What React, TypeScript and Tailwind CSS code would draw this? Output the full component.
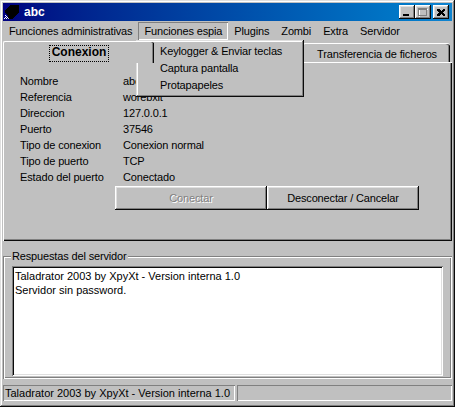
import React from "react";

const raisedWin =
  "shadow-[inset_-1px_-1px_#0a0a0a,inset_1px_1px_#dfdfdf,inset_-2px_-2px_#808080,inset_2px_2px_#ffffff]";
const raisedBtn =
  "shadow-[inset_-1px_-1px_#0a0a0a,inset_1px_1px_#ffffff,inset_-2px_-2px_#808080,inset_2px_2px_#dfdfdf]";
const sunkenThin = "shadow-[inset_1px_1px_#808080,inset_-1px_-1px_#ffffff]";

const menus = [
  "Funciones administrativas",
  "Funciones espia",
  "Plugins",
  "Zombi",
  "Extra",
  "Servidor",
];

const info = [
  ["Nombre", "abc"],
  ["Referencia", "worebxit"],
  ["Direccion", "127.0.0.1"],
  ["Puerto", "37546"],
  ["Tipo de conexion", "Conexion normal"],
  ["Tipo de puerto", "TCP"],
  ["Estado del puerto", "Conectado"],
];

function AppIcon() {
  return (
    <svg width="16" height="16" viewBox="0 0 16 16" shapeRendering="crispEdges">
      <polygon points="6,1 15,1 15,8 8,15 4,15 4,12 1,9 1,6" fill="#000" />
      <rect x="1" y="11" width="1" height="1" fill="#fff" />
      <rect x="2" y="12" width="1" height="1" fill="#fff" />
      <rect x="1" y="13" width="1" height="1" fill="#fff" />
      <rect x="3" y="13" width="1" height="1" fill="#fff" />
      <rect x="2" y="14" width="1" height="1" fill="#fff" />
      <rect x="0" y="14" width="1" height="1" fill="#fff" />
      <rect x="4" y="14" width="1" height="1" fill="#c0c0c0" />
    </svg>
  );
}

function TitleBar() {
  return (
    <div className="h-[18px] flex items-center bg-linear-to-r from-[#000080] to-[#1084d0]">
      <div className="ml-[1px] w-4 h-4">
        <AppIcon />
      </div>
      <span className="ml-[4px] font-bold text-white text-[12px] tracking-normal">abc</span>
      <div className="flex-1" />
      <div className={`w-[16px] h-[14px] bg-[#c0c0c0] ${raisedBtn} flex items-end pl-[4px] pb-[3px]`}>
        <div className="w-[6px] h-[2px] bg-black" />
      </div>
      <div className={`w-[16px] h-[14px] bg-[#c0c0c0] ${raisedBtn} flex items-center justify-center`}>
        <svg width="10" height="9" viewBox="0 0 10 9" shapeRendering="crispEdges">
          <rect x="1" y="1" width="9" height="8" fill="none" stroke="#fff" strokeWidth="1" />
          <rect x="0.5" y="0.5" width="8" height="7" fill="none" stroke="#808080" strokeWidth="1" />
          <rect x="0" y="0" width="9" height="2" fill="#808080" />
        </svg>
      </div>
      <div className={`ml-[2px] mr-[3px] w-[16px] h-[14px] bg-[#c0c0c0] ${raisedBtn} flex items-center justify-center`}>
        <svg width="8" height="7" viewBox="0 0 8 7" shapeRendering="crispEdges">
          <path d="M0 0h2l2 2 2-2h2v1L6 3.5 8 6v1H6L4 5 2 7H0V6l2-2.5L0 1z" fill="#000" />
        </svg>
      </div>
    </div>
  );
}

function MenuBar() {
  return (
    <div className="mt-[1px] h-[18px] flex">
      {menus.map((m, i) => (
        <div key={m} className={`px-[6px] leading-[18px] ${i === 1 ? sunkenThin : ""}`}>
          {m}
        </div>
      ))}
    </div>
  );
}

function Tabs() {
  return (
    <div className="h-[22px] flex items-end">
      <div className="relative z-10 -mb-px w-[151px] h-[22px] bg-[#c0c0c0] border-t border-l border-white rounded-tl-[2px] rounded-tr-[2px] shadow-[inset_-1px_0_#0a0a0a,inset_-2px_0_#808080] flex justify-center pt-[4px]">
        <span className="h-[15px] px-[2px] leading-[13px] font-bold outline-1 outline-dotted outline-black text-[12px] tracking-normal">
          Conexion
        </span>
      </div>
      {/* pestaña tapada por el menu */}
      <div className="w-[149px] h-[19px] border-t border-l border-white rounded-tl-[2px] rounded-tr-[2px] shadow-[inset_-1px_0_#0a0a0a,inset_-2px_0_#808080]" />
      <div className="w-[147px] h-[19px] border-t border-l border-white rounded-tl-[2px] rounded-tr-[3px] shadow-[inset_-1px_0_#0a0a0a,inset_-2px_0_#808080] flex justify-center pt-[2px]">
        Transferencia de ficheros
      </div>
    </div>
  );
}

function Panel() {
  return (
    <div className="h-[179px] shadow-[inset_1px_1px_#ffffff,inset_-1px_-1px_#0a0a0a,inset_-2px_-2px_#808080] pt-[11px] pl-[17px]">
      <div className="grid grid-cols-[103px_1fr]">
        {info.map(([k, v]) => (
          <React.Fragment key={k}>
            <div className="h-[16px] leading-[16px]">{k}</div>
            <div className="h-[16px] leading-[16px]">{v}</div>
          </React.Fragment>
        ))}
      </div>
      <div className="mt-[1px] ml-[95px] flex">
        <div className={`w-[152px] h-[24px] ${raisedBtn} flex items-center justify-center text-[#808080] [text-shadow:1px_1px_0_#ffffff]`}>
          Conectar
        </div>
        <div className={`w-[152px] h-[24px] ${raisedBtn} flex items-center justify-center`}>
          Desconectar / Cancelar
        </div>
      </div>
    </div>
  );
}

function ServerBox() {
  return (
    <div className="relative mt-[15px] h-[123px] shadow-[inset_1px_1px_#808080,inset_-1px_-1px_#ffffff,inset_2px_2px_#ffffff,inset_-2px_-2px_#808080] pt-[10px] pl-[9px] pr-[9px] pb-[3px]">
      <span className="absolute -top-[7px] left-[8px] px-[1px] bg-[#c0c0c0] leading-[14px]">
        Respuestas del servidor
      </span>
      <div className="h-full bg-white shadow-[inset_1px_1px_#808080,inset_-1px_-1px_#ffffff,inset_2px_2px_#0a0a0a,inset_-2px_-2px_#dfdfdf] pt-[3px] pl-[3px] leading-[14px] tracking-normal">
        <div>Taladrator 2003 by XpyXt - Version interna 1.0</div>
        <div>Servidor sin password.</div>
      </div>
    </div>
  );
}

function StatusBar() {
  return (
    <div className="mt-[6px] h-[16px] flex gap-[2px]">
      <div className={`w-[232px] ${sunkenThin} pl-[2px] leading-[16px] tracking-normal`}>
        Taladrator 2003 by XpyXt - Version interna 1.0
      </div>
      <div className={`flex-1 ${sunkenThin}`} />
    </div>
  );
}

export default function App() {
  return (
    <div
      className={`relative w-[455px] h-[407px] bg-[#c0c0c0] p-[3px] flex flex-col text-black text-[11px] tracking-[-0.15px] font-['Liberation_Sans',Arial,sans-serif] select-none ${raisedWin}`}
    >
      <TitleBar />
      <MenuBar />
      <Tabs />
      <Panel />
      <ServerBox />
      <StatusBar />

      {/* menu abierto: Funciones espia */}
      <div className={`absolute left-[136px] top-[40px] w-[168px] h-[57px] bg-[#c0c0c0] pt-[3px] ${raisedWin}`}>
        {["Keylogger & Enviar teclas", "Captura pantalla", "Protapapeles"].map((it) => (
          <div key={it} className="h-[17px] leading-[17px] pl-[24px]">
            {it}
          </div>
        ))}
      </div>
    </div>
  );
}
